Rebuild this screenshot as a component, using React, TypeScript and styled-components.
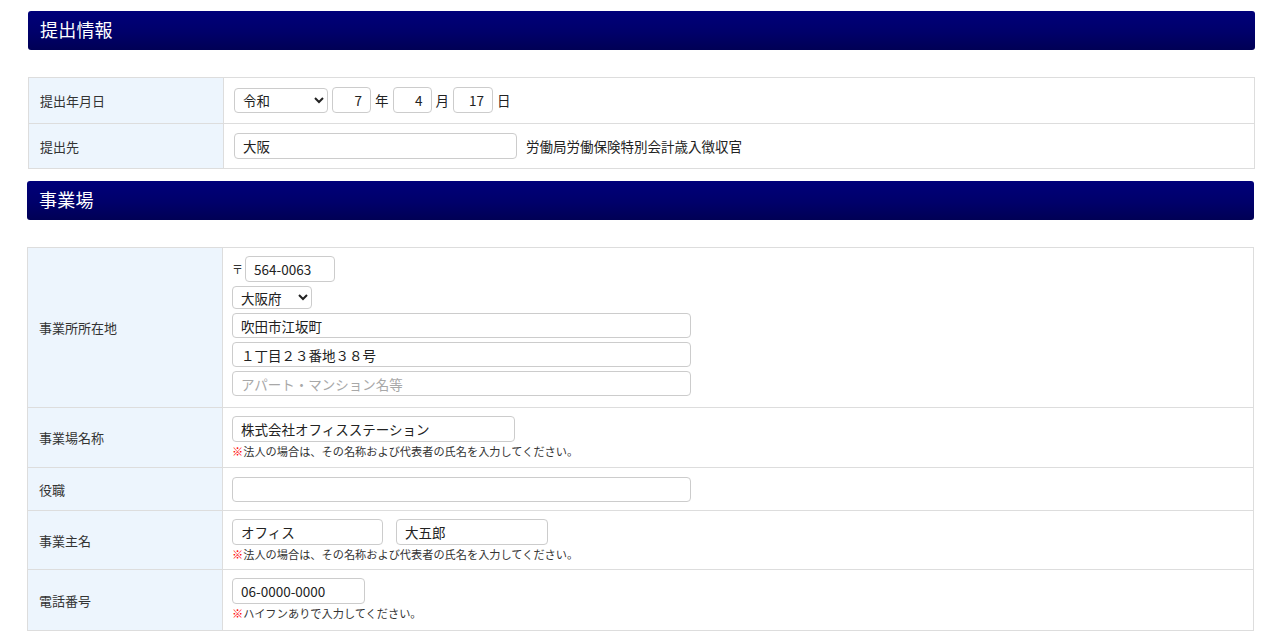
import styled, { createGlobalStyle } from 'styled-components';

const GlobalStyle = createGlobalStyle`
  body {
    margin: 0;
    background: #ffffff;
    font-family: "Noto Sans CJK JP", "Noto Sans", sans-serif;
    color: #333333;
  }
`;

const App = () => {
  return (
    <Page>
      <GlobalStyle />
      <Section $shift={1}>
        <SectionHeader>提出情報</SectionHeader>
        <FormTable>
          <tbody>
            <Row>
              <Label>提出年月日</Label>
              <Cell $pad="9px 10px 10px">
                <Inline>
                  <Select defaultValue="reiwa" $width={94}>
                    <option value="reiwa">令和</option>
                  </Select>
                  <Input defaultValue="7" $width={39} $align="right" />
                  <Unit>年</Unit>
                  <Input defaultValue="4" $width={39} $align="right" />
                  <Unit>月</Unit>
                  <Input defaultValue="17" $width={40} $align="right" />
                  <Unit>日</Unit>
                </Inline>
              </Cell>
            </Row>
            <Row>
              <Label>提出先</Label>
              <Cell $pad="9px 10px 9px">
                <Inline>
                  <Input defaultValue="大阪" $width={283} />
                  <Suffix>労働局労働保険特別会計歳入徴収官</Suffix>
                </Inline>
              </Cell>
            </Row>
          </tbody>
        </FormTable>
      </Section>

      <Section>
        <SectionHeader>事業場</SectionHeader>
        <FormTable>
          <tbody>
            <Row>
              <Label>事業所所在地</Label>
              <Cell $pad="8px 9px 11px">
                <Stack>
                  <Inline $gap={2}>
                    <Postal>〒</Postal>
                    <Input defaultValue="564-0063" $width={90} />
                  </Inline>
                  <Select defaultValue="osaka" $width={80} $height={23}>
                    <option value="osaka">大阪府</option>
                  </Select>
                  <Input defaultValue="吹田市江坂町" $width={459} $height={25} />
                  <Input defaultValue="１丁目２３番地３８号" $width={459} $height={25} />
                  <Input placeholder="アパート・マンション名等" $width={459} $height={25} />
                </Stack>
              </Cell>
            </Row>
            <Row>
              <Label>事業場名称</Label>
              <Cell>
                <Input defaultValue="株式会社オフィスステーション" $width={283} />
                <Note>
                  <Mark>※</Mark>法人の場合は、その名称および代表者の氏名を入力してください。
                </Note>
              </Cell>
            </Row>
            <Row>
              <Label>役職</Label>
              <Cell $pad="9px 9px 8px">
                <Input $width={459} $height={25} />
              </Cell>
            </Row>
            <Row>
              <Label>事業主名</Label>
              <Cell $pad="8px 9px 8px">
                <Inline $gap={13}>
                  <Input defaultValue="オフィス" $width={151} />
                  <Input defaultValue="大五郎" $width={152} />
                </Inline>
                <Note>
                  <Mark>※</Mark>法人の場合は、その名称および代表者の氏名を入力してください。
                </Note>
              </Cell>
            </Row>
            <Row>
              <Label>電話番号</Label>
              <Cell $pad="8px 9px 10px">
                <Input defaultValue="06-0000-0000" $width={133} />
                <Note>
                  <Mark>※</Mark>ハイフンありで入力してください。
                </Note>
              </Cell>
            </Row>
          </tbody>
        </FormTable>
      </Section>
    </Page>
  );
};

export default App;

const Page = styled.div`
  padding: 11px 26px 0 27px;
  display: flex;
  flex-direction: column;
  gap: 12px;
`;

const Section = styled.section<{ $shift?: number }>`
  display: flex;
  flex-direction: column;
  gap: 27px;
  margin-left: ${(p) => p.$shift ?? 0}px;
  margin-right: ${(p) => -(p.$shift ?? 0)}px;
`;

const SectionHeader = styled.h2`
  margin: 0;
  height: 39px;
  display: flex;
  align-items: center;
  padding: 0 12px 3px;
  box-sizing: border-box;
  border-radius: 3px;
  background: linear-gradient(to bottom, #00007a 0%, #00006a 55%, #000055 100%);
  color: #ffffff;
  font-size: 18px;
  font-weight: normal;
  letter-spacing: 0.2px;
`;

const FormTable = styled.table`
  width: 100%;
  border-collapse: collapse;
  border: 1px solid #dddddd;
`;

const Row = styled.tr`
  border-bottom: 1px solid #dddddd;
`;

const Label = styled.th`
  width: 172px;
  padding: 0 11px;
  background: #edf5fd;
  border-right: 1px solid #dddddd;
  text-align: left;
  font-size: 13px;
  font-weight: normal;
  color: #333333;
`;

const Cell = styled.td<{ $pad?: string }>`
  padding: ${(p) => p.$pad ?? '8px 9px 9px'};
  font-size: 13.5px;
`;

const Inline = styled.div<{ $gap?: number }>`
  display: flex;
  align-items: center;
  gap: ${(p) => p.$gap ?? 4}px;
`;

const Stack = styled.div`
  display: flex;
  flex-direction: column;
  align-items: flex-start;
  gap: 4px;
`;

const Input = styled.input<{ $width: number; $height?: number; $align?: string }>`
  display: block;
  box-sizing: border-box;
  width: ${(p) => p.$width}px;
  height: ${(p) => p.$height ?? 26}px;
  margin: 0;
  padding: 0 8px;
  border: 1px solid #cccccc;
  border-radius: 4px;
  background: #ffffff;
  font-family: "Noto Sans CJK JP", "Noto Sans", sans-serif;
  font-size: 13.5px;
  color: #222222;
  text-align: ${(p) => p.$align ?? 'left'};
  outline: none;

  &::placeholder {
    color: #a8a8a8;
  }
`;

const Select = styled.select<{ $width: number; $height?: number }>`
  display: block;
  box-sizing: border-box;
  width: ${(p) => p.$width}px;
  height: ${(p) => p.$height ?? 25}px;
  margin: 0;
  padding: 0 4px;
  border: 1px solid #cccccc;
  border-radius: 4px;
  background: #ffffff;
  font-family: "Noto Sans CJK JP", "Noto Sans", sans-serif;
  font-size: 13.5px;
  color: #222222;
`;

const Unit = styled.span`
  font-size: 13.5px;
  color: #222222;
`;

const Suffix = styled.span`
  margin-left: 5px;
  font-size: 13.5px;
  color: #222222;
`;

const Postal = styled.span`
  font-size: 11px;
  color: #333333;
`;

const Note = styled.p`
  margin: 2px 0 0;
  font-size: 11.2px;
  line-height: 14px;
  color: #333333;
`;

const Mark = styled.span`
  color: #ff0000;
`;
